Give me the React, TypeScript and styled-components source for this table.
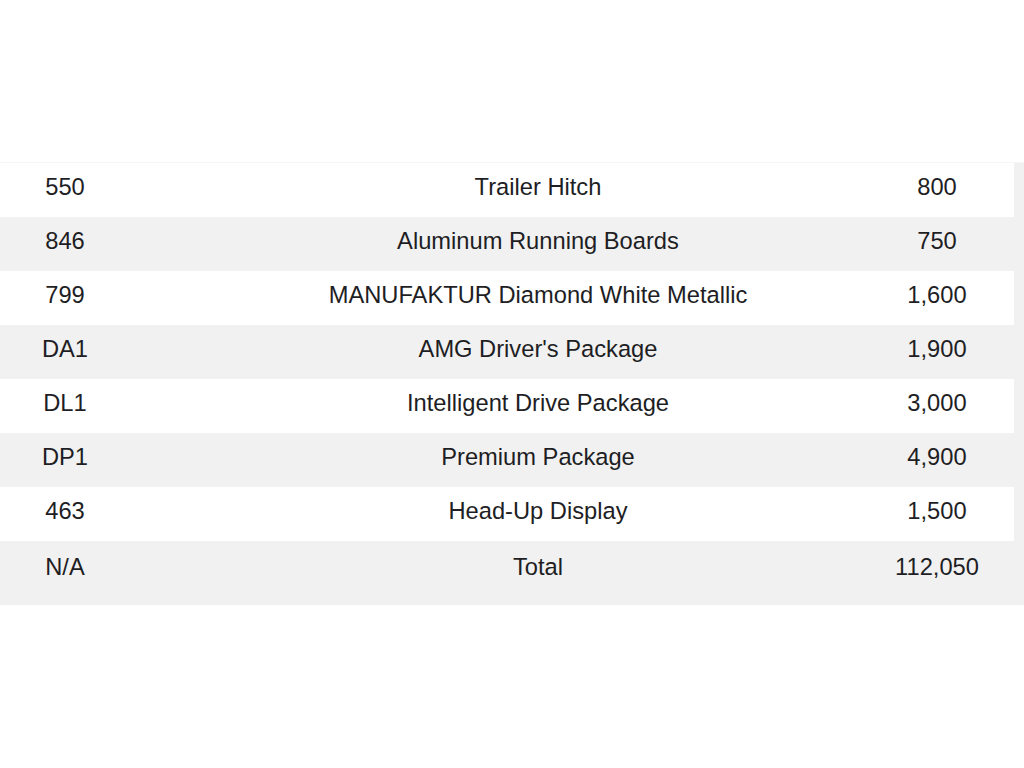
import React from "react";
import styled, { createGlobalStyle } from "styled-components";

const GlobalStyle = createGlobalStyle`
  body {
    margin: 0;
    background: #ffffff;
    font-family: "Liberation Sans", Arial, sans-serif;
  }
`;

const Page = styled.div`
  width: 1024px;
  height: 768px;
  padding-top: 162px;
  box-sizing: border-box;
`;

const Table = styled.div`
  width: 1024px;
  background: #f1f1f1;
  border-top: 1px solid #f6f6f6;
  padding-right: 10px;
  box-sizing: border-box;
`;

const Row = styled.div<{ $striped: boolean; $tall?: boolean }>`
  display: grid;
  grid-template-columns: 130px 730px 1fr;
  align-items: start;
  box-sizing: border-box;
  height: ${(p) => (p.$tall ? "64px" : "54px")};
  padding-top: ${(p) => (p.$tall ? "13px" : "11px")};
  background: ${(p) => (p.$striped ? "#f1f1f1" : "#ffffff")};
  color: #1e1e24;
  font-size: 23.7px;
  line-height: 27px;
`;

const Cell = styled.div<{ $indent?: number }>`
  text-align: center;
  padding-left: ${(p) => p.$indent ?? 0}px;
  white-space: nowrap;
`;

const rows = [
  { code: "550", name: "Trailer Hitch", price: "800" },
  { code: "846", name: "Aluminum Running Boards", price: "750" },
  { code: "799", name: "MANUFAKTUR Diamond White Metallic", price: "1,600" },
  { code: "DA1", name: "AMG Driver's Package", price: "1,900" },
  { code: "DL1", name: "Intelligent Drive Package", price: "3,000" },
  { code: "DP1", name: "Premium Package", price: "4,900" },
  { code: "463", name: "Head-Up Display", price: "1,500" },
];

function App() {
  return (
    <Page>
      <GlobalStyle />
      <Table>
        {rows.map((r, i) => (
          <Row key={r.code} $striped={i % 2 === 1}>
            <Cell>{r.code}</Cell>
            <Cell $indent={86}>{r.name}</Cell>
            <Cell>{r.price}</Cell>
          </Row>
        ))}
        <Row $striped $tall>
          <Cell>N/A</Cell>
          <Cell $indent={86}>Total</Cell>
          <Cell>112,050</Cell>
        </Row>
      </Table>
    </Page>
  );
}

export default App;
